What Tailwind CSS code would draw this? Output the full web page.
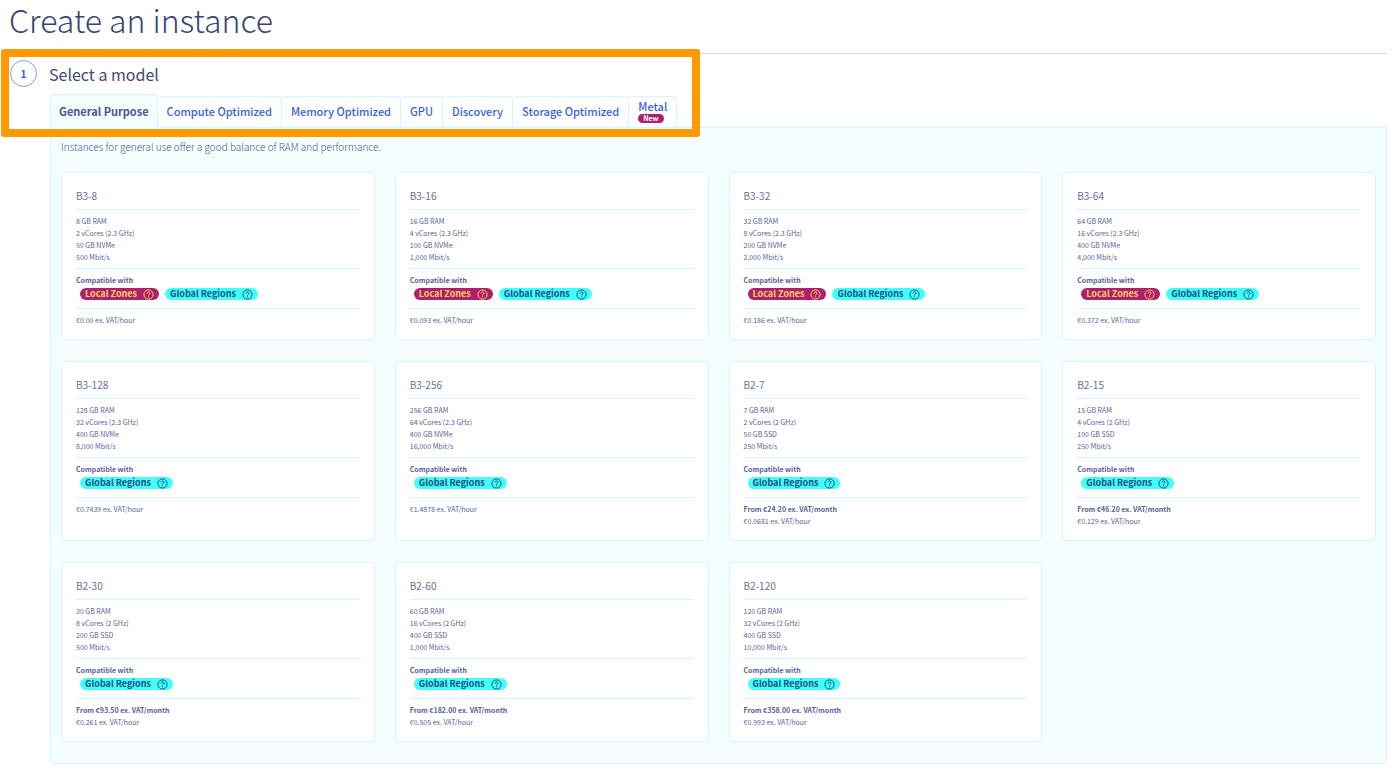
<!DOCTYPE html>
<html lang="en">
<head>
<meta charset="utf-8">
<meta name="viewport" content="width=device-width, initial-scale=1">
<title>Create an instance</title>
<script src="https://cdn.jsdelivr.net/npm/@tailwindcss/browser@4"></script>
</head>
<body class="bg-white font-['Noto_Sans_CJK_SC','Noto_Sans',sans-serif] text-[#5a6196]">
<header class="ml-[9px] mr-[13px] h-[54px] border-b border-[#dcdcdf]">
  <h1 class="text-[32px] leading-[38px] font-extralight text-[#3a4376]">Create an instance</h1>
</header>
<main class="relative ml-[10px] mr-[13px] pt-[6px]">
  <div class="flex items-center gap-3">
    <span class="flex size-[27px] items-center justify-center rounded-full border border-[#7f9af0] text-[10px] leading-[14px] font-bold text-[#3a5fdc]">1</span>
    <h2 class="text-[16px] leading-[24px] font-normal text-[#3f4878]">Select a model</h2>
  </div>
  <div class="ml-10 mt-[7px]">
    <div role="tablist" aria-label="Models" class="relative z-10 -mb-px flex h-[34px] items-end text-[11px] leading-[16px] font-medium text-[#3a5fdc]">
      <button role="tab" aria-selected="true" class="h-[34px] rounded-t border border-b-0 border-[#d3f6ff] bg-[#f5feff] px-2 pb-[2px] font-bold text-[#4d5592]">General Purpose</button>
      <button role="tab" class="h-8 rounded-t border border-l-0 border-[#d3f6ff] bg-white px-[9px] pb-[2px]">Compute Optimized</button>
      <button role="tab" class="h-8 rounded-t border border-l-0 border-[#d3f6ff] bg-white px-[9px] pb-[2px]">Memory Optimized</button>
      <button role="tab" class="h-8 rounded-t border border-l-0 border-[#d3f6ff] bg-white px-[9px] pb-[2px]">GPU</button>
      <button role="tab" class="h-8 rounded-t border border-l-0 border-[#d3f6ff] bg-white px-[9px] pb-[2px]">Discovery</button>
      <button role="tab" class="h-8 rounded-t border border-l-0 border-[#d3f6ff] bg-white px-[9px] pb-[2px]">Storage Optimized</button>
      <button role="tab" class="flex h-8 flex-col items-start rounded-t border border-l-0 border-[#d3f6ff] bg-white px-[9px] pt-[2px]"><span class="leading-[14px]">Metal</span><span class="mt-px h-[9px] rounded-full bg-[#ae1f6f] px-[5px] text-[7px] leading-[9px] font-bold text-white">New</span></button>
    </div>
    <section role="tabpanel" class="rounded-b border border-[#d3f6ff] bg-[#f5feff] px-[10px] pb-[21px]">
      <p class="pt-3 text-[10px] leading-[14px] font-light text-[#4d5592]">Instances for general use offer a good balance of RAM and performance.</p>
      <div id="models" class="mt-[18px] grid grid-cols-4 items-start gap-x-5 gap-y-[21px]"></div>
    </section>
  </div>
  <div aria-hidden="true" class="pointer-events-none absolute -left-[9px] -top-[5px] z-20 h-[88px] w-[699px] rounded-[3px] border-8 border-[#ff9900]"></div>
</main>
<script>
const help = '<svg class="size-[11px]" viewBox="0 0 11 11" fill="none" stroke="currentColor" aria-hidden="true"><circle cx="5.5" cy="5.5" r="4.6"/><path d="M4 4.500c0-2 3-2 3-.2C7 5.400 5.500 5.300 5.500 6.500M5.500 7.300v1"/></svg>';
const local = '<span class="flex h-3 items-center gap-[6px] rounded-full bg-[#ae1f6f] px-[5px] text-[9px] leading-[12px] font-bold text-[#fcd354]">Local Zones' + help + '</span>';
const regions = '<span class="flex h-3 items-center gap-[6px] rounded-full bg-[#42fffa] px-[5px] text-[9px] leading-[12px] font-bold text-[#125083]">Global Regions' + help + '</span>';
// name, RAM, cores, disk, bandwidth, hourly price, monthly price, local zones
const models = [
  ['B3-8', '8 GB RAM', '2 vCores (2.3 GHz)', '50 GB NVMe', '500 Mbit/s', '€0.00', '', true],
  ['B3-16', '16 GB RAM', '4 vCores (2.3 GHz)', '100 GB NVMe', '1,000 Mbit/s', '€0.093', '', true],
  ['B3-32', '32 GB RAM', '8 vCores (2.3 GHz)', '200 GB NVMe', '2,000 Mbit/s', '€0.186', '', true],
  ['B3-64', '64 GB RAM', '16 vCores (2.3 GHz)', '400 GB NVMe', '4,000 Mbit/s', '€0.372', '', true],
  ['B3-128', '128 GB RAM', '32 vCores (2.3 GHz)', '400 GB NVMe', '8,000 Mbit/s', '€0.7439', '', false],
  ['B3-256', '256 GB RAM', '64 vCores (2.3 GHz)', '400 GB NVMe', '16,000 Mbit/s', '€1.4878', '', false],
  ['B2-7', '7 GB RAM', '2 vCores (2 GHz)', '50 GB SSD', '250 Mbit/s', '€0.0681', '€24.20', false],
  ['B2-15', '15 GB RAM', '4 vCores (2 GHz)', '100 GB SSD', '250 Mbit/s', '€0.129', '€46.20', false],
  ['B2-30', '30 GB RAM', '8 vCores (2 GHz)', '200 GB SSD', '500 Mbit/s', '€0.261', '€93.50', false],
  ['B2-60', '60 GB RAM', '16 vCores (2 GHz)', '400 GB SSD', '1,000 Mbit/s', '€0.505', '€182.00', false],
  ['B2-120', '120 GB RAM', '32 vCores (2 GHz)', '400 GB SSD', '10,000 Mbit/s', '€0.993', '€358.00', false]
];
document.getElementById('models').innerHTML = models.map(([name, ram, cores, disk, net, hour, month, zones]) => `
  <article class="h-full rounded border border-[#d3f6ff] bg-white px-[14px] pt-[13px] pb-[13px] text-[7px] leading-[12px]">
    <h3 class="h-[23px] text-[10px] leading-[20px] text-[#686f9e]">${name}</h3>
    <ul class="border-t border-[#d3f6ff] py-[5px]"><li>${ram}</li><li>${cores}</li><li>${disk}</li><li>${net}</li></ul>
    <div class="border-t border-[#d3f6ff] pt-[5px] pb-2">
      <p class="font-bold">Compatible with</p>
      <div class="mt-[2px] flex gap-[6px] pl-1">${zones ? local : ''}${regions}</div>
    </div>
    <div class="border-t border-[#d3f6ff] pt-[5px]">
      ${month ? `<p class="font-bold">From ${month} ex. VAT/month</p>` : ''}<p>${hour} ex. VAT/hour</p>
    </div>
  </article>`).join('');
</script>
</body>
</html>
